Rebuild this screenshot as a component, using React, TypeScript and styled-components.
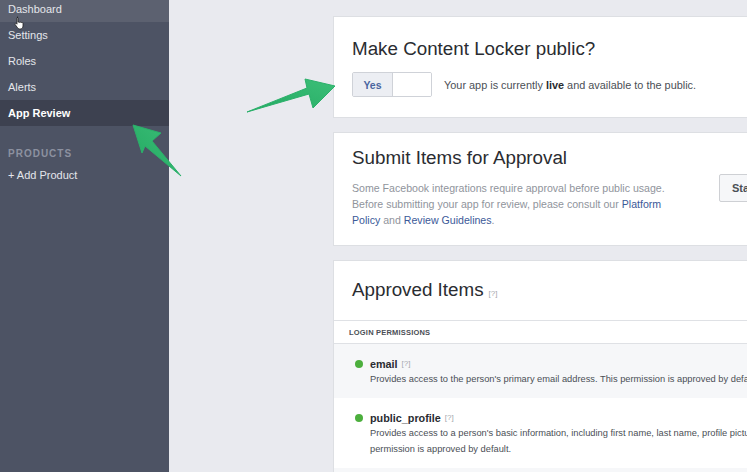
import React from "react";
import styled, { createGlobalStyle } from "styled-components";

const Global = createGlobalStyle`
  html, body { margin: 0; padding: 0; overflow: hidden; }
  body { font-family: "Liberation Sans", Arial, Helvetica, sans-serif; }
`;

const Page = styled.div`
  position: relative;
  display: flex;
  width: 747px;
  height: 472px;
  overflow: hidden;
  background: #e9eaef;
`;

const Sidebar = styled.nav`
  width: 169px;
  flex-shrink: 0;
  background: #4d5364;
  display: flex;
  flex-direction: column;
  margin-top: -4px;
`;

const NavItem = styled.div<{ $state?: "hover" | "active" }>`
  height: 26px;
  display: flex;
  align-items: center;
  padding-left: 8px;
  font-size: 11px;
  color: ${(p) => (p.$state === "active" ? "#ffffff" : "#e4e6eb")};
  font-weight: ${(p) => (p.$state === "active" ? 700 : 400)};
  background: ${(p) =>
    p.$state === "active" ? "#3d4150" : p.$state === "hover" ? "#5c6170" : "transparent"};
`;

const SectionLabel = styled.div`
  margin-top: 20px;
  height: 14px;
  padding-left: 8px;
  display: flex;
  align-items: center;
  font-size: 10px;
  font-weight: 700;
  letter-spacing: 1px;
  color: #8c91a0;
`;

const AddItem = styled.div`
  margin-top: 9px;
  padding-left: 8px;
  font-size: 11px;
  color: #e4e6eb;
`;

const Cursor = styled.svg`
  position: absolute;
  left: 14px;
  top: 16px;
`;

const Main = styled.main`
  flex: 1;
  display: flex;
  flex-direction: column;
  gap: 14px;
  padding: 16px 0 0 164px;
  overflow: hidden;
`;

const Card = styled.section`
  flex-shrink: 0;
  width: 660px;
  background: #ffffff;
  border: 1px solid #dddfe3;
  border-right: none;
  box-sizing: border-box;
`;

const CardBody = styled.div<{ $pt?: number; $pb?: number }>`
  padding: ${(p) => p.$pt ?? 20}px 18px ${(p) => p.$pb ?? 20}px 18px;
`;

const Title = styled.h2`
  margin: 0;
  font-size: 18.8px;
  font-weight: 400;
  color: #2a2c31;
  line-height: 24px;
  display: flex;
  align-items: baseline;
  gap: 5px;
  white-space: nowrap;
`;

const Help = styled.span<{ $size?: number }>`
  font-size: ${(p) => p.$size ?? 8}px;
  color: #a4a7ad;
  font-weight: 400;
`;

const ToggleRow = styled.div`
  display: flex;
  align-items: center;
  margin-top: 11px;
  gap: 12px;
`;

const Toggle = styled.div`
  display: flex;
  width: 80px;
  height: 25px;
  border: 1px solid #cfd2d8;
  border-radius: 2px;
  box-sizing: border-box;
  overflow: hidden;
`;

const ToggleOn = styled.div`
  width: 39px;
  background: #eceef3;
  border-right: 1px solid #cfd2d8;
  display: flex;
  align-items: center;
  justify-content: center;
  font-size: 10.5px;
  font-weight: 700;
  color: #4a66a0;
`;

const ToggleOff = styled.div`
  flex: 1;
  background: #fff;
`;

const Note = styled.span`
  font-size: 10.9px;
  color: #4b4f56;
  b { color: #2a2c31; }
`;

const SubmitRow = styled.div`
  display: flex;
  align-items: flex-start;
`;

const SubmitText = styled.div`
  width: 367px;
  flex-shrink: 0;
`;

const Para = styled.p`
  margin: 10px 0 0 0;
  width: 340px;
  font-size: 10.6px;
  line-height: 16px;
  color: #90949c;
  a { color: #3b5998; text-decoration: none; }
`;

const StartButton = styled.button`
  margin-top: 28px;
  height: 28px;
  padding: 0 12px;
  white-space: nowrap;
  font-family: inherit;
  font-size: 11px;
  font-weight: 700;
  color: #4b4f56;
  background: #f6f7f9;
  border: 1px solid #ced0d4;
  border-radius: 2px;
`;

const ApprovedHeader = styled.div`
  height: 60px;
  box-sizing: border-box;
  display: flex;
  align-items: center;
  padding: 3px 18px 0 18px;
  border-bottom: 1px solid #dfe1e5;
`;

const GroupHead = styled.div`
  height: 22px;
  display: flex;
  align-items: center;
  padding-left: 15px;
  font-size: 7.5px;
  font-weight: 700;
  color: #4b4f56;
  letter-spacing: 0.2px;
  border-bottom: 1px solid #dfe1e5;
`;

const PermRow = styled.div<{ $alt?: boolean }>`
  background: ${(p) => (p.$alt ? "#f6f7f9" : "#ffffff")};
  padding: 13px 20px 11px 36px;
`;

const PermName = styled.div`
  position: relative;
  display: flex;
  align-items: center;
  gap: 4px;
  font-size: 10.8px;
  font-weight: 700;
  color: #2a2c31;
  line-height: 14px;
`;

const Dot = styled.span`
  position: absolute;
  left: -15px;
  top: 3px;
  width: 8px;
  height: 8px;
  border-radius: 50%;
  background: #4caf3d;
`;

const PermDesc = styled.div`
  font-size: 9.3px;
  line-height: 16px;
  color: #4b4f56;
  width: 540px;
`;

const Arrow = styled.svg`
  position: absolute;
  left: 0;
  top: 0;
  pointer-events: none;
`;

export default function App() {
  return (
    <>
      <Global />
      <Page>
        <Sidebar>
          <NavItem $state="hover">Dashboard</NavItem>
          <NavItem>Settings</NavItem>
          <NavItem>Roles</NavItem>
          <NavItem>Alerts</NavItem>
          <NavItem $state="active">App Review</NavItem>
          <SectionLabel>PRODUCTS</SectionLabel>
          <AddItem>+ Add Product</AddItem>
        </Sidebar>
        <Main>
          <Card>
            <CardBody $pt={20} $pb={20}>
              <Title>Make Content Locker public?</Title>
              <ToggleRow>
                <Toggle>
                  <ToggleOn>Yes</ToggleOn>
                  <ToggleOff />
                </Toggle>
                <Note>
                  Your app is currently <b>live</b> and available to the public.
                </Note>
              </ToggleRow>
            </CardBody>
          </Card>
          <Card>
            <CardBody $pt={13} $pb={17}>
              <SubmitRow>
                <SubmitText>
                  <Title>Submit Items for Approval</Title>
                  <Para>
                    Some Facebook integrations require approval before public usage.
                    Before submitting your app for review, please consult our{" "}
                    <a>Platform Policy</a> and <a>Review Guidelines</a>.
                  </Para>
                </SubmitText>
                <StartButton>Start a Submission</StartButton>
              </SubmitRow>
            </CardBody>
          </Card>
          <Card>
            <ApprovedHeader>
              <Title>
                Approved Items <Help>[?]</Help>
              </Title>
            </ApprovedHeader>
            <GroupHead>LOGIN PERMISSIONS</GroupHead>
            <PermRow $alt>
              <PermName>
                <Dot />
                email <Help>[?]</Help>
              </PermName>
              <PermDesc>
                Provides access to the person's primary email address. This permission is approved by default.
              </PermDesc>
            </PermRow>
            <PermRow>
              <PermName>
                <Dot />
                public_profile <Help>[?]</Help>
              </PermName>
              <PermDesc>
                Provides access to a person's basic information, including first name, last name, profile picture,
                gender and age range. This permission is approved by default.
              </PermDesc>
            </PermRow>
            <PermRow $alt>
              <PermName>
                <Dot />
                user_friends <Help>[?]</Help>
              </PermName>
            </PermRow>
          </Card>
        </Main>
        <Cursor width="12" height="14" viewBox="0 0 12 14">
          <path
            d="M3 1.2c.6 0 1 .4 1 1V6l.3-.1c.5 0 .9.3 1 .7.2-.4.6-.6 1-.5.4 0 .8.3.9.7.2-.3.5-.4.9-.4.5.1.9.5.9 1v2.6c0 1.7-1.2 3-2.8 3H5.6c-.9 0-1.6-.5-2-1.2L1.2 8.6c-.3-.5-.1-1 .3-1.2.4-.2.9 0 1.2.3l.3.5V2.2c0-.6.4-1 1-1z"
            fill="#ffffff"
            stroke="#222"
            strokeWidth="0.8"
          />
        </Cursor>
        <Arrow width="747" height="472" viewBox="0 0 747 472">
          <defs>
            <linearGradient id="g1" x1="0" y1="1" x2="1" y2="0">
              <stop offset="0" stopColor="#22a861" />
              <stop offset="1" stopColor="#3cbf78" />
            </linearGradient>
          </defs>
          <polygon
            points="247,112 309,94 313,108 335,86 305,79 307,88"
            fill="url(#g1)"
            stroke="#2bb06a"
            strokeWidth="1"
            strokeLinejoin="round"
          />
          <polygon
            points="133,125 161,133 152,141 181,176 145,146 142,153"
            fill="url(#g1)"
            stroke="#2bb06a"
            strokeWidth="1"
            strokeLinejoin="round"
          />
        </Arrow>
      </Page>
    </>
  );
}
